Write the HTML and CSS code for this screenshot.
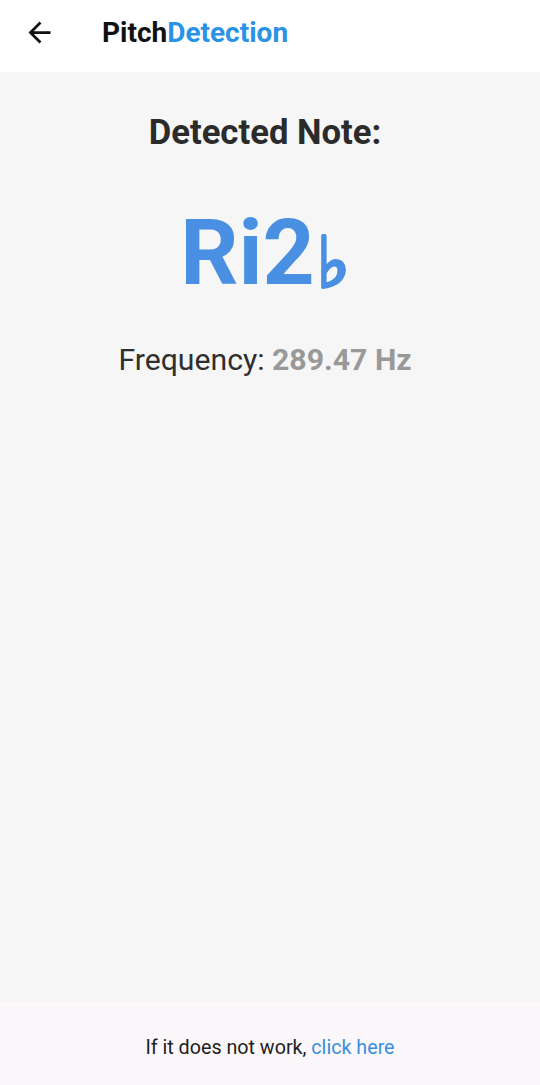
FILE: index.html
```html
<!DOCTYPE html>
<html>
<head>
<meta charset="utf-8">
<link rel="stylesheet" href="styles.css">
</head>
<body>
<div class="app">
  <header class="topbar">
    <button class="back" aria-label="Back">
      <svg width="33" height="33" viewBox="0 0 24 24"><path d="M20 11H7.83l5.59-5.59L12 4l-8 8 8 8 1.41-1.41L7.83 13H20v-2z" fill="#111"/></svg>
    </button>
    <h1 class="title">Pitch<span class="accent">Detection</span></h1>
  </header>
  <main class="content">
    <h2 class="label">Detected Note:</h2>
    <div class="note">Ri2<span class="flat">♭</span></div>
    <p class="freq">Frequency: <span class="freq-val">289.47 Hz</span></p>
  </main>
  <footer class="footer">
    <p>If it does not work, <a class="link" href="#">click here</a></p>
  </footer>
</div>
</body>
</html>
```
FILE: styles.css
```css
html, body { margin: 0; padding: 0; }
body { font-family: Roboto, "Noto Sans", sans-serif; background: #f6f6f6; }
.app { width: 540px; height: 1085px; display: flex; flex-direction: column; }
.topbar { height: 72px; background: #fff; display: flex; align-items: center; flex-shrink: 0; padding-bottom: 8px; box-sizing: border-box; }
.back { border: 0; background: none; padding: 0; margin-left: 23px; width: 33px; height: 33px; display: flex; }
.title { margin: 0 0 0 46px; font-size: 28px; font-weight: 700; color: #111; letter-spacing: 0; }
.accent { color: #2b93e6; }
.content { flex: 1; display: flex; flex-direction: column; align-items: center; padding-right: 10px; }
.label { margin: 38px 0 0; font-size: 34.7px; font-weight: 700; color: #2b2b2b; line-height: 44px; }
.note { margin-top: 44px; font-size: 91px; font-weight: 700; color: #4a90e2; line-height: 110px; display: flex; align-items: baseline; }
.flat { font-family: "DejaVu Sans", sans-serif; font-size: 70px; font-weight: 700; margin-left: 2px; -webkit-text-stroke: 3.5px #4a90e2; position: relative; top: 3px; }
.freq { margin: 25px 0 0; font-size: 30.2px; color: #2f2f2f; line-height: 40px; }
.freq-val { font-weight: 700; color: #999; }
.footer { height: 83px; background: #fbf7fb; display: flex; align-items: center; justify-content: center; flex-shrink: 0; }
.footer p { margin: 8px 0 0; font-size: 19.7px; color: #1e1e1e; }
.link { color: #3a8fdc; text-decoration: none; }
```
